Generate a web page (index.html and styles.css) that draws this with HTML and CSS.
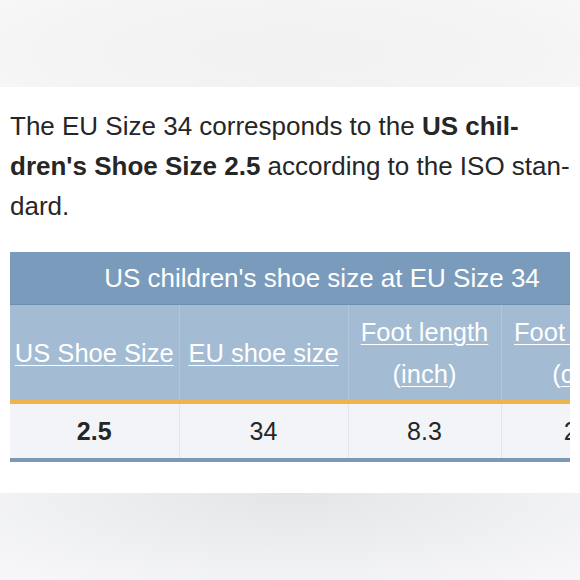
FILE: index.html
```html
<!DOCTYPE html>
<html>
<head>
<meta charset="utf-8">
<link rel="stylesheet" href="styles.css">
</head>
<body>
<div class="top-band"></div>
<main class="content">
  <p class="intro">The EU Size 34 corresponds to the <b>US chil-<br>dren's Shoe Size 2.5</b> according to the ISO stan-<br>dard.</p>
  <div class="table-wrap">
    <table class="sizes">
      <colgroup>
        <col class="c1"><col class="c2"><col class="c3"><col class="c4">
      </colgroup>
      <thead>
        <tr><th class="title" colspan="4">US children's shoe size at EU Size 34</th></tr>
        <tr class="heads">
          <th><a href="#">US Shoe Size</a></th>
          <th><a href="#">EU shoe size</a></th>
          <th><a href="#">Foot length</a><br>(<a href="#">inch</a>)</th>
          <th><a href="#">Foot length</a><br>(<a href="#">cm</a>)</th>
        </tr>
      </thead>
      <tbody>
        <tr>
          <td class="strong">2.5</td>
          <td>34</td>
          <td>8.3</td>
          <td>21</td>
        </tr>
      </tbody>
    </table>
  </div>
</main>
<div class="bottom-band"></div>
</body>
</html>
```
FILE: styles.css
```css
html, body {
  margin: 0;
  padding: 0;
  background: #ffffff;
}
body {
  width: 580px;
  height: 580px;
  overflow: hidden;
  font-family: "Liberation Sans", Arial, sans-serif;
  color: #262626;
}
.top-band {
  height: 87px;
  background: radial-gradient(ellipse 70% 120% at 50% 60%, #f1f1f1 0%, #f4f4f4 60%, #f9f9f9 100%);
}
.content {
  height: 406px;
  padding: 0 10px;
  box-sizing: border-box;
  background: #ffffff;
}
.intro {
  margin: 0;
  padding-top: 19px;
  font-size: 26px;
  line-height: 40px;
}
.intro b {
  font-weight: bold;
}
.table-wrap {
  margin-top: 26px;
  width: 560px;
  overflow: hidden;
}
.sizes {
  border-collapse: collapse;
  width: 644px;
  table-layout: fixed;
}
.sizes th, .sizes td {
  padding: 0;
  text-align: center;
}
.c1 { width: 169px; }
.c2 { width: 169px; }
.c3 { width: 153px; }
.c4 { width: 153px; }
.title {
  height: 52px;
  background: #7a9bbb;
  color: #ffffff;
  font-weight: normal;
  font-size: 26px;
  border-bottom: 1px solid #6f8fae;
  padding-right: 20px !important;
}
.heads th {
  height: 95px;
  background: #a3bbd3;
  color: #ffffff;
  font-weight: normal;
  font-size: 25.5px;
  line-height: 42px;
  white-space: nowrap;
  border-left: 1px solid #b3c7db;
  border-bottom: 4px solid #f0b44c;
}
.heads th:first-child {
  border-left: none;
}
.heads a {
  color: #ffffff;
  text-decoration: underline;
  text-decoration-thickness: 1px;
  text-underline-offset: 3px;
}
.sizes td {
  height: 54px;
  background: #f2f4f7;
  font-size: 25px;
  color: #262626;
  border-left: 1px solid #dfe6ee;
  border-bottom: 4px solid #7d98b2;
}
.sizes td:first-child {
  border-left: none;
}
.sizes td.strong {
  font-weight: bold;
}
.bottom-band {
  height: 87px;
  background: radial-gradient(ellipse 75% 140% at 50% 0%, #e4e5e8 0%, #eeeff1 50%, #f8f8fa 100%);
}
```
